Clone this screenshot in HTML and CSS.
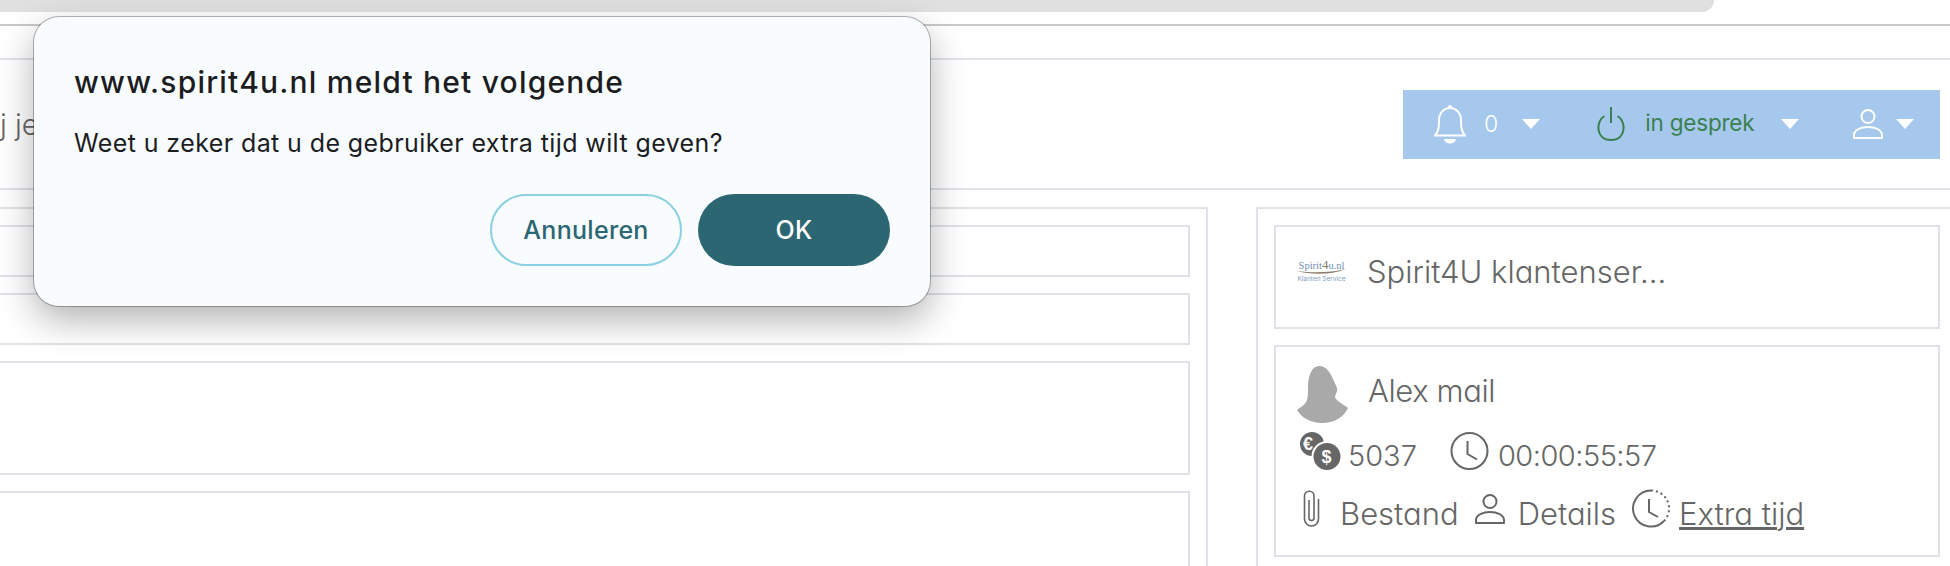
FILE: index.html
```html
<!DOCTYPE html>
<html lang="nl">
<head>
  <meta charset="UTF-8">
  <title>Spirit4U</title>
  <link rel="stylesheet" href="styles.css">
</head>
<body>
  <!-- browser chrome remains -->
  <div class="tabstrip"></div>
  <div class="navline"></div>

  <!-- Page header -->
  <div class="header">
    <div class="crumb">j je</div>
    <div class="statusbar">
      <svg class="ic-bell" viewBox="0 0 34 40" width="34" height="40">
        <path d="M1 31.5 H33 M2 31.5 C6 27 6 22 6 16 C6 9 11 4 17 4 C23 4 28 9 28 16 C28 22 28 27 32 31.5" fill="none" stroke="#fff" stroke-width="2"/>
        <circle cx="17" cy="3" r="2" fill="#fff"/>
        <path d="M11 35 H23 C22 41 12 41 11 35Z" fill="#fff"/>
      </svg>
      <span class="count">0</span>
      <span class="caret caret-count"></span>
      <svg class="ic-power" viewBox="0 0 30 34" width="30" height="34">
        <path d="M8.5 9 C-0.5 14 -0.5 33 15 33 C30.5 33 30.5 14 21.5 9" fill="none" stroke="#3a8050" stroke-width="2"/>
        <path d="M15 0 V16" fill="none" stroke="#3a8050" stroke-width="2"/>
      </svg>
      <span class="state">in gesprek</span>
      <span class="caret caret-state"></span>
      <svg class="ic-user" viewBox="0 0 30 30" width="30" height="30">
        <circle cx="15" cy="7.5" r="6.5" fill="none" stroke="#fff" stroke-width="2"/>
        <path d="M1 29 V26 C1 21 8 18 15 18 C22 18 29 21 29 26 V29 Z" fill="none" stroke="#fff" stroke-width="2" stroke-linejoin="round"/>
      </svg>
      <span class="caret caret-user"></span>
    </div>
  </div>

  <div class="content">
    <div class="col-left">
      <div class="box box-short"></div>
      <div class="box box-short"></div>
      <div class="box box-mid"></div>
      <div class="box box-tall"></div>
    </div>

    <div class="col-right">
      <div class="card card-company">
        <div class="logo">
          <div class="logo-name">Spirit<span class="logo-four">4</span>u.nl</div>
          <svg class="logo-swoosh" viewBox="0 0 49 6" width="49" height="6">
            <path d="M0 2 C14 4 34 4 49 0 C34 6 14 6 0 2Z" fill="#8a7a66"/>
          </svg>
          <div class="logo-sub">Klanten Service</div>
        </div>
        <span class="name">Spirit4U klantenser...</span>
      </div>

      <div class="card card-user">
        <div class="row row-name">
          <svg class="avatar" viewBox="0 0 51 57" width="51" height="57">
            <path d="M22 0 C29 0 33 6 36 13 C38 18 41 22 40 25 C39 28 38 30 38 31 C39 35 46 38 51 42 C47 51 37 57 25 57 C14 57 5 52 0 44 C4 41 9 38 10 34 C11 30 11 27 11 22 C11 12 14 0 22 0Z" fill="#a9a9a9"/>
          </svg>
          <span class="name">Alex mail</span>
        </div>
        <div class="row row-credit">
          <svg class="coins" viewBox="0 0 41 38" width="41" height="38">
            <circle cx="12" cy="12" r="12" fill="#666"/>
            <text x="3" y="18" class="coin-sign">€</text>
            <circle cx="27" cy="24.500" r="15.500" fill="#fff"/>
            <circle cx="27" cy="24.500" r="13.500" fill="#666"/>
            <text x="21.500" y="31" class="coin-sign">$</text>
          </svg>
          <span class="val val-credit">5037</span>
          <svg class="clock" viewBox="0 0 39 38" width="39" height="38">
            <circle cx="19.500" cy="19" r="18" fill="none" stroke="#666" stroke-width="2"/>
            <path d="M17.500 9 V22 L27 27.500" fill="none" stroke="#666" stroke-width="2"/>
          </svg>
          <span class="val val-time">00:00:55:57</span>
        </div>
        <div class="row row-links">
          <svg class="clip" viewBox="0 0 17 37" width="17" height="37">
            <path d="M6 10 V28 A2.500 2.500 0 0 0 11 28 V6 A4.750 4.750 0 0 0 1.500 6 V29 A7 7 0 0 0 15.500 29 V9" fill="none" stroke="#666" stroke-width="1.600"/>
          </svg>
          <span class="val word link-file">Bestand</span>
          <svg class="person" viewBox="0 0 30 30" width="30" height="30">
            <circle cx="15" cy="7.500" r="6.500" fill="none" stroke="#666" stroke-width="2"/>
            <path d="M1 29 V26 C1 21 8 18 15 18 C22 18 29 21 29 26 V29 Z" fill="none" stroke="#666" stroke-width="2" stroke-linejoin="round"/>
          </svg>
          <span class="val word link-details">Details</span>
          <svg class="clock-extra" viewBox="0 0 40 39" width="40" height="39">
            <path d="M20 1.500 A18 18 0 1 0 33 32" fill="none" stroke="#666" stroke-width="2"/>
            <path d="M20 1.500 A18 18 0 0 1 33 32" fill="none" stroke="#666" stroke-width="2" stroke-dasharray="2 3"/>
            <path d="M18 10 V23 L27 28" fill="none" stroke="#666" stroke-width="2"/>
          </svg>
          <a class="val word link-extra" href="#">Extra tijd</a>
        </div>
      </div>
    </div>
  </div>

  <!-- Browser confirm dialog -->
  <div class="dialog">
    <div class="dialog-title">www.spirit4u.nl meldt het volgende</div>
    <div class="dialog-text">Weet u zeker dat u de gebruiker extra tijd wilt geven?</div>
    <div class="dialog-actions">
      <button class="btn btn-cancel">Annuleren</button>
      <button class="btn btn-ok">OK</button>
    </div>
  </div>
</body>
</html>
```

FILE: styles.css
```css
/* Reset */
html, body {
  margin: 0;
  padding: 0;
  height: 100%;
  overflow: hidden;
  background: #fff;
  color: #666;
  font-family: "Inter", "Liberation Sans", sans-serif;
}
/* Browser leftovers at the top */
.tabstrip {
  width: 1714px;
  height: 12px;
  background: #e0e0e0;
  border-bottom-right-radius: 25px;
}
.navline {
  margin-top: 12px;
  height: 32px;
  border-top: 2px solid #c9c9c9;
}
/* Header */
.header {
  display: flex;
  justify-content: space-between;
  align-items: center;
  height: 128px;
  border-top: 2px solid #dfe2e7;
  border-bottom: 2px solid #dfe2e7;
}
.crumb {
  font-size: 29px;
  font-weight: 300;
  font-feature-settings: "cv11";
}
.statusbar {
  display: flex;
  align-items: center;
  box-sizing: border-box;
  width: 537px;
  height: 69px;
  margin-right: 10px;
  padding-left: 30px;
  background: #a6c8ec;
  color: #fff;
  font-size: 23px;
  font-weight: 300;
}
.count { margin-left: 17px; }
.ic-power { margin-left: 56px; }
.state {
  width: 112px;
  margin-left: 19px;
  margin-bottom: 3px;
  color: #3a8050;
  font-size: 22.500px;
  font-weight: 400;
  letter-spacing: -0.2px;
  white-space: nowrap;
  font-feature-settings: "cv11";
}
.ic-user { margin-left: 54px; }
.caret {
  width: 0;
  height: 0;
  border-left: 9px solid transparent;
  border-right: 9px solid transparent;
  border-top: 10px solid #fff;
}
.caret-count { margin-left: 24px; }
.caret-state { margin-left: 24px; }
.caret-user { margin-left: 13px; }
/* Two columns */
.content {
  display: flex;
  padding-top: 17px;
}
.col-left {
  flex: none;
  box-sizing: border-box;
  width: 1208px;
  height: 400px;
  padding: 16px 16px 0 0;
  border-top: 2px solid #dfe2e7;
  border-right: 2px solid #dfe2e7;
}
.col-right {
  flex: none;
  box-sizing: border-box;
  width: 702px;
  margin-left: 48px;
  height: 400px;
  padding: 16px;
  border: 2px solid #dfe2e7;
  border-bottom: 0;
}
.box {
  box-sizing: border-box;
  margin-bottom: 16px;
  border: 2px solid #dfe2e7;
  border-left: 0;
}
.box-short { height: 52px; }
.box-mid { height: 114px; }
.box-tall { height: 200px; }
/* Right side cards */
.card {
  box-sizing: border-box;
  margin-bottom: 16px;
  border: 2px solid #dfe2e7;
  padding-left: 21px;
}
.card-company {
  display: flex;
  align-items: center;
  height: 104px;
  padding-bottom: 12px;
}
.logo {
  flex: none;
  width: 49px;
  white-space: nowrap;
  text-align: center;
}
.logo-name {
  font-family: "Liberation Serif", serif;
  font-size: 10.500px;
  line-height: 12px;
  color: #6d8fb3;
}
.logo-four {
  font-size: 13px;
  line-height: 10px;
  color: #8a7a66;
}
.logo-swoosh {
  display: block;
  margin-top: -3px;
}
.logo-sub {
  font-size: 6.500px;
  line-height: 8px;
  color: #7d9cbc;
}
.name {
  margin-left: 21px;
  font-size: 31px;
  font-weight: 300;
  font-feature-settings: "cv11";
}
.card-user {
  height: 212px;
  padding-top: 19px;
}
.row {
  display: flex;
  align-items: center;
}
.avatar { flex: none; }
.row-name .name {
  margin-left: 20px;
  margin-bottom: 8px;
  letter-spacing: -0.4px;
}
.row-credit { margin-top: 9px; }
.row-links { margin-top: 19px; }
.val {
  margin-top: 10px;
  font-size: 29px;
  font-weight: 300;
  line-height: 28px;
  color: #666;
}
.word {
  font-size: 31px;
  font-feature-settings: "cv11";
}
.coins { margin-left: 3px; }
.val-credit { margin-left: 7px; }
.clock { margin-left: 33px; }
.val-time { margin-left: 9px; letter-spacing: -0.5px; }
.clip { margin-left: 6px; }
.link-file { margin-left: 20px; }
.person { margin-left: 16px; }
.link-details { margin-left: 13px; }
.clock-extra { margin-left: 15px; }
.link-extra { margin-left: 8px; }
.coin-sign {
  font-family: "Liberation Sans", sans-serif;
  font-size: 18px;
  font-weight: 700;
  fill: #fff;
}
/* Confirm dialog lies over the page */
.dialog {
  position: absolute;
  top: 17px;
  left: 34px;
  box-sizing: border-box;
  width: 896px;
  height: 289px;
  padding: 47px 40px 40px 40px;
  background: #f8fcff;
  border-radius: 25px;
  box-shadow: 0 0 0 1px rgba(0,0,0,0.28), 0 14px 36px rgba(0,0,0,0.3);
  color: #1d1d1f;
}
.dialog-title {
  font-size: 30px;
  font-weight: 500;
  letter-spacing: 1.2px;
  line-height: 36px;
}
.dialog-text {
  margin-top: 28px;
  font-size: 25px;
  font-weight: 400;
  letter-spacing: 0.4px;
  line-height: 30px;
}
.dialog-actions {
  display: flex;
  justify-content: flex-end;
  gap: 16px;
  margin-top: 36px;
}
.btn {
  box-sizing: border-box;
  width: 192px;
  height: 72px;
  border-radius: 36px;
  font-family: inherit;
  font-size: 25px;
  font-weight: 500;
  letter-spacing: 0.3px;
}
.btn-cancel {
  background: transparent;
  border: 2px solid #8ad0e2;
  color: #2c6672;
}
.btn-ok {
  background: #2c6672;
  border: 0;
  color: #fff;
}
```
